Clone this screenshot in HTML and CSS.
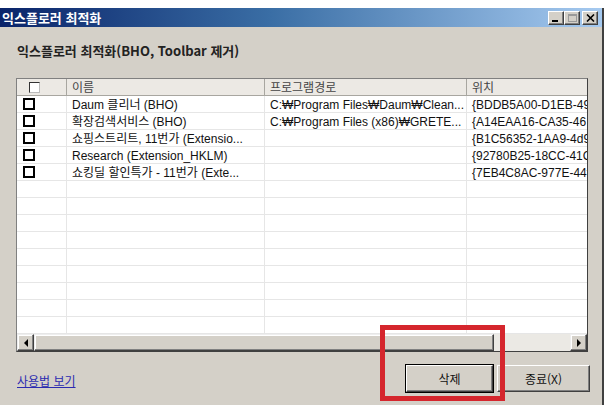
FILE: index.html
```html
<!DOCTYPE html>
<html lang="ko">
<head>
<meta charset="utf-8">
<title>익스플로러 최적화</title>
<link rel="stylesheet" href="styles.css">
</head>
<body>
<div class="window">
  <div class="titlebar">
    <span class="title">익스플로러 최적화</span>
    <div class="caption-btns">
      <span class="cbtn"><span class="min-glyph"></span></span>
      <span class="cbtn"><span class="max-glyph"></span></span>
      <span class="cbtn close-btn">
        <svg width="9" height="8" viewBox="0 0 9 8"><path d="M1 0.5 L8 7.5 M8 0.5 L1 7.5" stroke="#000" stroke-width="1.6"/></svg>
      </span>
    </div>
  </div>
  <div class="body">
    <h1 class="heading">익스플로러 최적화(BHO, Toolbar 제거)</h1>
    <div class="listview">
      <div class="header row">
        <div class="cell chk"><span class="hcheck"></span></div>
        <div class="cell">이름</div>
        <div class="cell">프로그램경로</div>
        <div class="cell">위치</div>
      </div>
      <div class="rows">
        <div class="row"><div class="cell chk"><span class="check"></span></div><div class="cell">Daum 클리너 (BHO)</div><div class="cell">C:₩Program Files₩Daum₩Clean...</div><div class="cell">{BDDB5A00-D1EB-49</div></div>
        <div class="row"><div class="cell chk"><span class="check"></span></div><div class="cell">확장검색서비스 (BHO)</div><div class="cell">C:₩Program Files (x86)₩GRETE...</div><div class="cell">{A14EAA16-CA35-46</div></div>
        <div class="row"><div class="cell chk"><span class="check"></span></div><div class="cell">쇼핑스트리트, 11번가 (Extensio...</div><div class="cell"></div><div class="cell">{B1C56352-1AA9-4d9</div></div>
        <div class="row"><div class="cell chk"><span class="check"></span></div><div class="cell">Research (Extension_HKLM)</div><div class="cell"></div><div class="cell">{92780B25-18CC-41C</div></div>
        <div class="row"><div class="cell chk"><span class="check"></span></div><div class="cell">쇼킹딜 할인특가 - 11번가 (Exte...</div><div class="cell"></div><div class="cell">{7EB4C8AC-977E-44f</div></div>
        <div class="row"><div class="cell chk"></div><div class="cell"></div><div class="cell"></div><div class="cell"></div></div>
        <div class="row"><div class="cell chk"></div><div class="cell"></div><div class="cell"></div><div class="cell"></div></div>
        <div class="row"><div class="cell chk"></div><div class="cell"></div><div class="cell"></div><div class="cell"></div></div>
        <div class="row"><div class="cell chk"></div><div class="cell"></div><div class="cell"></div><div class="cell"></div></div>
        <div class="row"><div class="cell chk"></div><div class="cell"></div><div class="cell"></div><div class="cell"></div></div>
        <div class="row"><div class="cell chk"></div><div class="cell"></div><div class="cell"></div><div class="cell"></div></div>
        <div class="row"><div class="cell chk"></div><div class="cell"></div><div class="cell"></div><div class="cell"></div></div>
        <div class="row"><div class="cell chk"></div><div class="cell"></div><div class="cell"></div><div class="cell"></div></div>
        <div class="row last"><div class="cell chk"></div><div class="cell"></div><div class="cell"></div><div class="cell"></div></div>
      </div>
      <div class="hscroll">
        <span class="sbtn"><span class="tri-left"></span></span>
        <span class="thumb"></span>
        <span class="track"></span>
        <span class="sbtn"><span class="tri-right"></span></span>
      </div>
    </div>
    <div class="footer">
      <a class="link" href="#">사용법 보기</a>
      <div class="buttons">
        <button class="btn default">삭제</button>
        <button class="btn wide">종료(X)</button>
      </div>
    </div>
  </div>
  <div class="highlight"></div>
</div>
</body>
</html>
```

FILE: styles.css
```css
* { box-sizing: border-box; }
html, body { margin: 0; padding: 0; background: #ffffff; }
body { font-family: "Liberation Sans", "Noto Sans CJK KR", sans-serif; font-size: 12px; color: #111; }

.window {
  position: relative;
  margin-top: 8px;
  width: 604px;
  height: 397px;
  background: #d4d0c8;
  border-right: 2px solid #404040;
  display: flex;
  flex-direction: column;
}

.titlebar {
  height: 19px;
  background: linear-gradient(to right, #0a246a 0%, #3a6ea5 45%, #a6caf0 100%);
  display: flex;
  align-items: center;
  justify-content: space-between;
  padding: 0 4px 0 2px;
}
.title {
  color: #fff;
  font-family: "Noto Sans CJK KR", sans-serif;
  font-weight: 700;
  font-size: 13px;
  line-height: 19px;
}
.caption-btns { display: flex; gap: 0; align-items: center; }
.cbtn {
  width: 16px;
  height: 14px;
  background: #d4d0c8;
  border-top: 1px solid #fff;
  border-left: 1px solid #fff;
  border-right: 1px solid #404040;
  border-bottom: 1px solid #404040;
  box-shadow: inset -1px -1px 0 #808080;
  display: flex;
  align-items: center;
  justify-content: center;
  position: relative;
}
.close-btn { margin-left: 2px; }
.min-glyph { width: 6px; height: 2px; background: #000; margin-top: 6px; margin-left: -3px; }
.max-glyph { width: 9px; height: 8px; border: 1px solid #9a9a9a; border-top-width: 2px; }

.body { flex: 1; padding: 0 16px 0 16px; display: flex; flex-direction: column; }
.heading {
  margin: 14px 0 0 1px;
  height: 20px;
  font-family: "Noto Sans CJK KR", sans-serif;
  font-size: 13px;
  font-weight: 700;
  line-height: 20px;
  color: #222;
}

.listview {
  margin-top: 17px;
  width: 572px;
  height: 274px;
  border: 1px solid #808080;
  border-right-color: #404040;
  border-bottom-color: #404040;
  background: #fff;
  display: flex;
  flex-direction: column;
  overflow: hidden;
}
.row {
  display: grid;
  grid-template-columns: 50px 198px 202px 120px;
  height: 17px;
}
.cell {
  border-right: 1px solid #e6e6e6;
  border-bottom: 1px solid #e6e6e6;
  padding-left: 5px;
  padding-top: 1px;
  line-height: 16px;
  white-space: nowrap;
  overflow: hidden;
  font-size: 12px;
  color: #111;
}
.row .cell:last-child { border-right: none; }
.chk { padding-left: 6px; padding-top: 0; display: flex; align-items: center; }
.check {
  width: 12px; height: 12px;
  border: 2px solid #000;
  background: #fff;
}
.header { background: #ece9e4; }
.header .cell {
  border-right: 1px solid #a8a6a0;
  border-bottom: 1px solid #a8a6a0;
  color: #444;
  padding-top: 0;
  font-family: "Noto Sans CJK KR", sans-serif;
}
.header .chk { padding-left: 12px; }
.hcheck { width: 11px; height: 11px; border: 1px solid #333; border-right-color: #bbb; border-bottom-color: #bbb; background: #fff; }
.rows { height: 238px; overflow: hidden; }

.hscroll {
  height: 17px;
  display: flex;
  background: #ebe9e4;
}
.sbtn {
  width: 17px; height: 17px;
  background: #d4d0c8;
  border-top: 1px solid #eee;
  border-left: 1px solid #eee;
  border-right: 1px solid #404040;
  border-bottom: 1px solid #404040;
  box-shadow: inset -1px -1px 0 #808080, inset 1px 1px 0 #fff;
  display: flex; align-items: center; justify-content: center;
}
.tri-left { width: 0; height: 0; border-top: 4px solid transparent; border-bottom: 4px solid transparent; border-right: 4px solid #000; }
.tri-right { width: 0; height: 0; border-top: 4px solid transparent; border-bottom: 4px solid transparent; border-left: 4px solid #000; }
.thumb {
  width: 460px; height: 17px;
  background: #d4d0c8;
  border-top: 1px solid #eee;
  border-left: 1px solid #eee;
  border-right: 1px solid #404040;
  border-bottom: 1px solid #404040;
  box-shadow: inset -1px -1px 0 #808080, inset 1px 1px 0 #fff;
}
.track { flex: 1; }

.footer {
  flex: 1;
  display: flex;
  align-items: flex-start;
  justify-content: space-between;
  padding-top: 13px;
  width: 574px;
}
.link {
  margin-top: 7px;
  margin-left: 1px;
  color: #2b2bb0;
  text-decoration: underline;
  font-family: "Noto Sans CJK KR", sans-serif;
  font-size: 12px;
}
.buttons { display: flex; gap: 4px; }
.btn {
  width: 87px; height: 27px;
  background: #d4d0c8;
  font-family: "Noto Sans CJK KR", sans-serif;
  font-size: 12px;
  color: #111;
  border-top: 1px solid #fff;
  border-left: 1px solid #fff;
  border-right: 1px solid #404040;
  border-bottom: 1px solid #404040;
  box-shadow: inset -1px -1px 0 #808080;
  padding: 0;
}
.btn.default { outline: 1px solid #000; }
.btn.wide { width: 93px; }

.highlight {
  position: absolute;
  left: 380px;
  top: 317px;
  width: 125px;
  height: 76px;
  border: 5px solid #d5262d;
  pointer-events: none;
}
```
